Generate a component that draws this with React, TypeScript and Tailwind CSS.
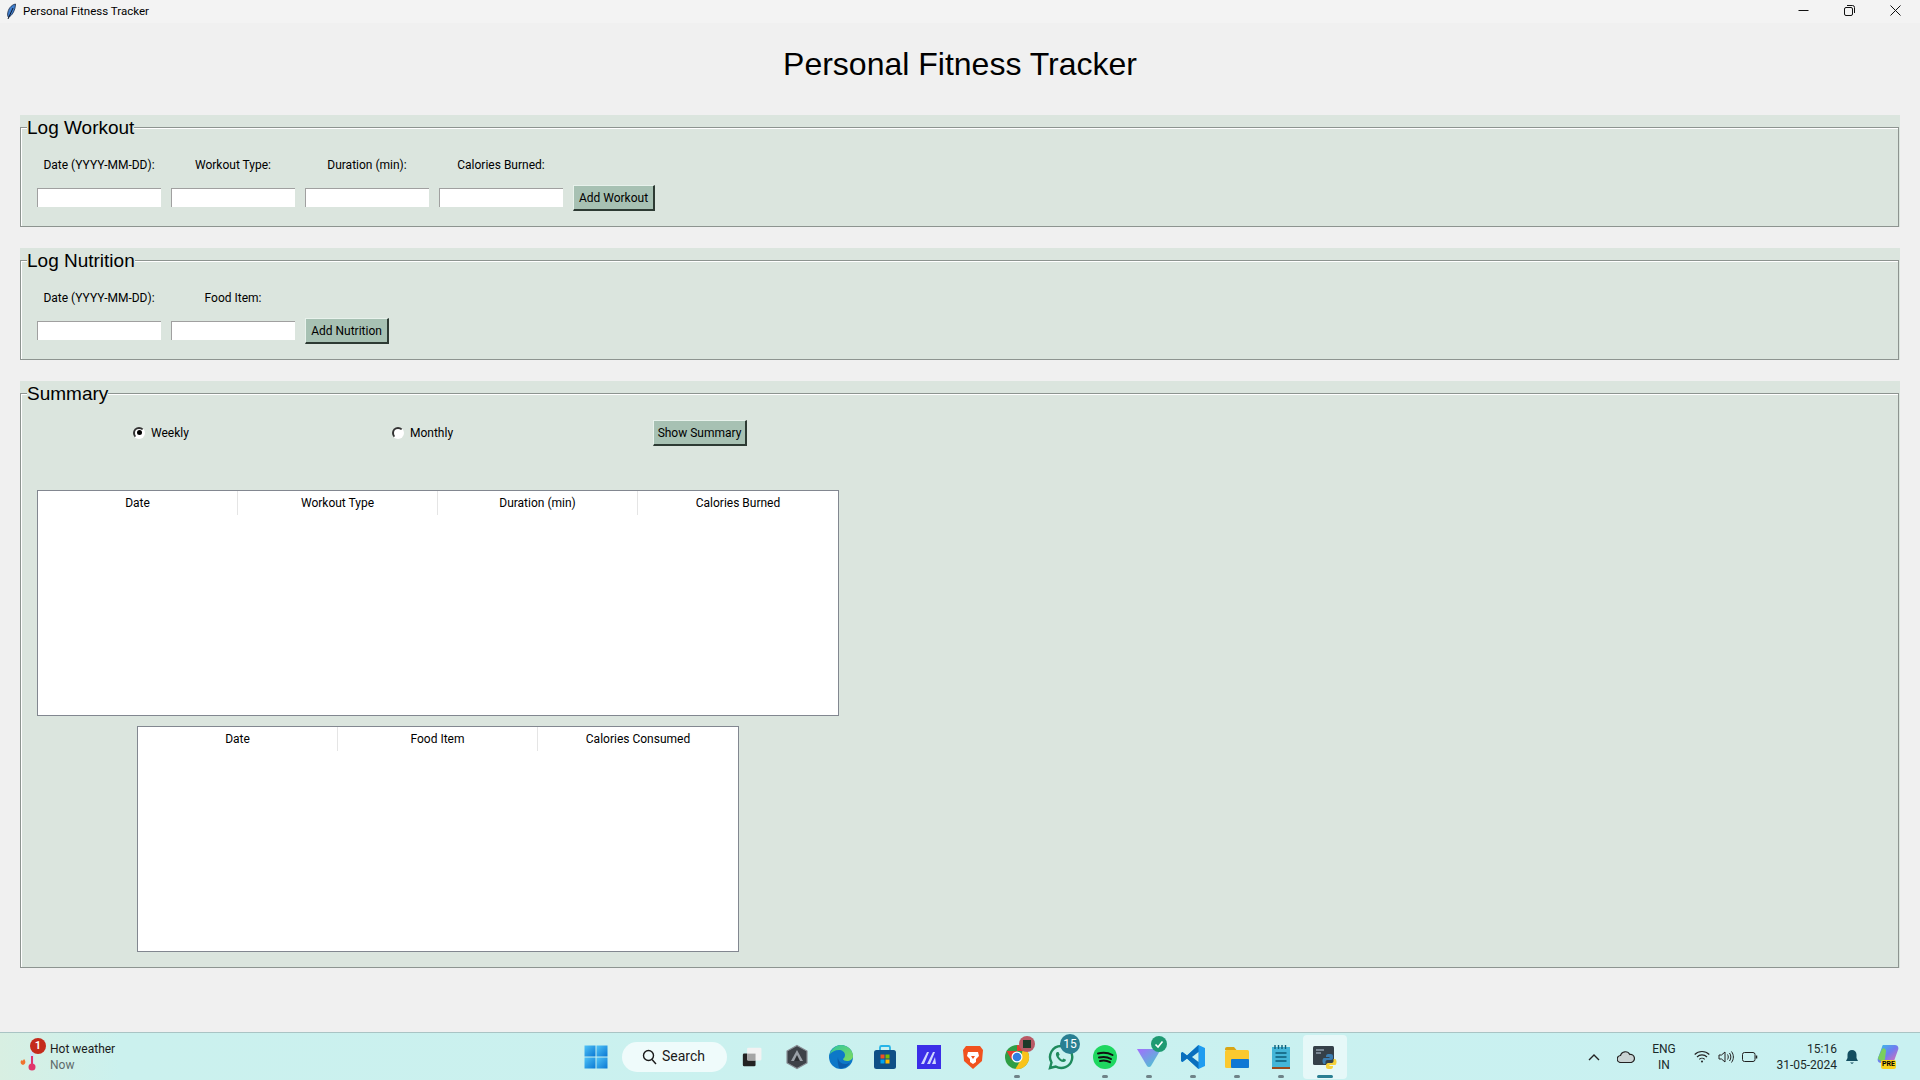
import React from "react";

const ui = "font-['Roboto',sans-serif]";

function Field({ children }: { children: React.ReactNode }) {
  return <div className="text-center text-[12px] leading-[16px] text-black">{children}</div>;
}

function Entry() {
  return <div className="h-[19px] w-[124px] -mt-[1px] bg-white border-t border-l border-[#a0a0a0]" />;
}

function TkButton({ children, w }: { children: React.ReactNode; w: string }) {
  return (
    <div className={`${w} h-[26px] flex items-center justify-center bg-[#a7c1b3] border-t border-l border-[#e8f2ec] border-r-2 border-b-2 border-r-[#2d3a33] border-b-[#2d3a33] text-[12px] text-black`}>
      {children}
    </div>
  );
}

function Frame({ title, h, children }: { title: string; h: string; children: React.ReactNode }) {
  return (
    <section className={`${h} mx-[20px] pt-[12px] pr-[1px] bg-[#dbe5de]`}>
      <div className="relative h-full border border-[#8d9490] px-[16px] shadow-[inset_1px_1px_0_#ffffff]">
        <h2 className="absolute left-[6px] -top-[12px] bg-[#dbe5de] text-[19px] leading-[24px] text-black font-['Liberation_Sans',sans-serif]">
          {title}
        </h2>
        {children}
      </div>
    </section>
  );
}

function Table({ cols, className }: { cols: string[]; className: string }) {
  return (
    <div className={`${className} h-[226px] bg-white border border-[#828790]`}>
      <div className="flex h-[24px]">
        {cols.map((c, i) => (
          <div key={c} className={`w-[200px] flex items-center justify-center text-[12px] text-black ${i < cols.length - 1 ? "border-r border-[#e5e5e5]" : ""}`}>
            {c}
          </div>
        ))}
      </div>
    </div>
  );
}

function Radio({ on, label }: { on?: boolean; label: string }) {
  return (
    <div className="flex items-center gap-[6px] text-[12px] text-black">
      <span className="relative w-[12px] h-[12px] rounded-full bg-white border-2 border-transparent border-t-[#333] border-l-[#333] -mt-[1px]">
        {on && <span className="absolute left-[1.5px] top-[1.5px] w-[5px] h-[5px] rounded-full bg-black" />}
      </span>
      {label}
    </div>
  );
}

function TaskIcon({ children, dot, active }: { children: React.ReactNode; dot?: boolean; active?: boolean }) {
  return (
    <div className={`relative w-[44px] h-[44px] flex items-center justify-center rounded ${active ? "bg-[#e6f8f8]" : ""}`}>
      {children}
      {dot && <span className="absolute bottom-[1px] left-[19px] w-[6px] h-[3px] rounded-full bg-[#6f8388]" />}
      {active && <span className="absolute bottom-[1px] left-[14px] w-[16px] h-[3px] rounded-full bg-[#2a7f92]" />}
    </div>
  );
}

const S = ({ children, size = 26 }: { children: React.ReactNode; size?: number }) => (
  <svg width={size} height={size} viewBox="0 0 26 26">{children}</svg>
);

function Badge({ children, color, className }: { children: React.ReactNode; color: string; className: string }) {
  return (
    <span className={`absolute rounded-full flex items-center justify-center text-white ${color} ${className}`}>{children}</span>
  );
}

export default function App() {
  return (
    <div className={`h-screen w-full flex flex-col overflow-hidden bg-[#f0f0f0] ${ui}`}>
      {/* Title bar */}
      <header className="h-[23px] shrink-0 bg-[#f3f3f3] flex items-center pl-[5px]">
        <svg width="12" height="18" viewBox="0 0 12 18">
          <path d="M10.500 1C6 2 3 6 2.600 11c-.1 1.500.2 2.600.8 3.200C7 13 10.500 7 10.500 1z" fill="#3f7fd0" stroke="#1a2a44" strokeWidth="0.8" />
          <path d="M8 5 3 16" stroke="#10182a" strokeWidth="1" />
        </svg>
        <span className="ml-[6px] text-[11.5px] text-black">Personal Fitness Tracker</span>
        <div className="ml-auto flex items-center -mt-[2px]">
          <svg className="mr-[35px]" width="11" height="11" viewBox="0 0 11 11"><path d="M0.500 5.500h10" stroke="#111" /></svg>
          <svg className="mr-[35px]" width="11" height="11" viewBox="0 0 11 11" fill="none" stroke="#111"><rect x="0.500" y="2.500" width="8" height="8" rx="1.500" /><path d="M3 .5h5.500a2 2 0 0 1 2 2V8" /></svg>
          <svg className="mr-[19px]" width="11" height="11" viewBox="0 0 11 11"><path d="M.5.5l10 10M10.500.5l-10 10" stroke="#111" /></svg>
        </div>
      </header>

      <main className="flex-1 min-h-0">
        <h1 className="mt-[23px] mb-[35px] h-[34px] leading-[36px] text-center text-[32px] text-black font-['Liberation_Sans',sans-serif]">
          Personal Fitness Tracker
        </h1>

        <Frame title="Log Workout" h="h-[112px]">
          <div className="grid grid-cols-[124px_124px_124px_124px_auto] gap-x-[10px] justify-start items-center pt-[29px]">
            <Field>Date (YYYY-MM-DD):</Field>
            <Field>Workout Type:</Field>
            <Field>Duration (min):</Field>
            <Field>Calories Burned:</Field>
            <span />
            <div className="col-span-5 h-[12px]" />
            <Entry />
            <Entry />
            <Entry />
            <Entry />
            <TkButton w="w-[82px]">Add Workout</TkButton>
          </div>
        </Frame>

        <div className="h-[21px]" />

        <Frame title="Log Nutrition" h="h-[112px]">
          <div className="grid grid-cols-[124px_124px_auto] gap-x-[10px] justify-start items-center pt-[29px]">
            <Field>Date (YYYY-MM-DD):</Field>
            <Field>Food Item:</Field>
            <span />
            <div className="col-span-3 h-[12px]" />
            <Entry />
            <Entry />
            <TkButton w="w-[84px]">Add Nutrition</TkButton>
          </div>
        </Frame>

        <div className="h-[21px]" />

        <Frame title="Summary" h="h-[587px]">
          <div className="grid grid-cols-[259px_261px_auto] justify-start items-center pl-[96px] pt-[26px]">
            <Radio on label="Weekly" />
            <Radio label="Monthly" />
            <TkButton w="w-[94px]">Show Summary</TkButton>
          </div>
          <Table className="mt-[44px] w-[802px]" cols={["Date", "Workout Type", "Duration (min)", "Calories Burned"]} />
          <Table className="mt-[10px] ml-[100px] w-[602px]" cols={["Date", "Food Item", "Calories Consumed"]} />
        </Frame>
      </main>

      {/* Taskbar */}
      <footer className="h-[48px] shrink-0 flex items-center border-t border-[#a9c4c4] bg-[linear-gradient(90deg,#d8efe2_0px,#cbf1ee_120px,#c9f1f1_100%)]">
        <div className="relative w-[584px] shrink-0 h-full flex items-center pl-[50px]">
          <svg className="absolute left-[18px] top-[14px]" width="20" height="26" viewBox="0 0 20 26">
            <path d="M6 12c2 2 2 5-1 6-3-1-3-4-1-5 0 1 1 1 2-1z" fill="#f0732e" />
            <rect x="12" y="4" width="4" height="16" rx="2" fill="#cfe0f8" />
            <circle cx="14" cy="20" r="3.500" fill="#e0356b" />
            <rect x="13" y="9" width="2" height="10" fill="#e0356b" />
          </svg>
          <Badge color="bg-[#c42b1c]" className="left-[30px] top-[5px] w-[16px] h-[16px] text-[11px] font-semibold">1</Badge>
          <div className="text-[12px] leading-[16px]">
            <div className="text-[#1b1b1b]">Hot weather</div>
            <div className="text-[#5e6b6b]">Now</div>
          </div>
        </div>

        <svg width="24" height="24" viewBox="0 0 24 24" className="shrink-0">
          <defs>
            <linearGradient id="w" x1="0" y1="0" x2="1" y2="1"><stop offset="0" stopColor="#4fc3f7" /><stop offset="1" stopColor="#0a78d4" /></linearGradient>
          </defs>
          <rect x="0.500" y="0.500" width="11" height="11" fill="url(#w)" />
          <rect x="12.500" y="0.500" width="11" height="11" fill="url(#w)" />
          <rect x="0.500" y="12.500" width="11" height="11" fill="url(#w)" />
          <rect x="12.500" y="12.500" width="11" height="11" fill="url(#w)" />
        </svg>

        <div className="ml-[14px] w-[105px] h-[30px] shrink-0 rounded-full bg-[#effbfb] flex items-center pl-[20px] gap-[5px] text-[14px] text-[#1a1a1a]">
          <svg width="15" height="16" viewBox="0 0 15 16" fill="none" stroke="#1a1a1a" strokeWidth="1.400"><circle cx="6.500" cy="6.500" r="5" /><path d="M10 10.500l4 4.500" /></svg>
          Search
        </div>

        <div className="ml-[4px] flex items-center shrink-0">
          <TaskIcon>
            <S size={22}>
              <rect x="1" y="9" width="15" height="15" rx="1.500" fill="#222" />
              <rect x="6" y="2" width="17" height="15" rx="1.500" fill="#f2f2f2" />
              <rect x="6" y="9" width="10" height="8" fill="#a5a5a5" />
            </S>
          </TaskIcon>
          <TaskIcon>
            <S>
              <path d="M13 1.500 23 7v12l-10 5.500L3 19V7z" fill="#3e4248" stroke="#8a8f96" strokeWidth="1.200" />
              <path d="M13 6l6 11H7z" fill="#9aa0a7" />
              <path d="M13 11l3 6h-6z" fill="#2c2f33" />
            </S>
          </TaskIcon>
          <TaskIcon>
            <S>
              <defs>
                <linearGradient id="e1" x1="0" y1="0" x2="1" y2="1"><stop offset="0" stopColor="#2fc6a0" /><stop offset="1" stopColor="#7fdc5e" /></linearGradient>
              </defs>
              <circle cx="13" cy="13" r="12" fill="#0d78c8" />
              <path d="M1.500 11C3 5 8 1 13 1c6.500 0 12 5 12 11 0 3.500-3 5-6 5-2 0-4-1-4-2 1-1 2-2 2-4 0-3-3-5-6-5-4 0-8 2-10 5z" fill="url(#e1)" />
              <path d="M10 13c0 4 3 7 7 7 2 0 4-.5 5-2-2 5-7 7-11 6-1-4-2-8-1-11z" fill="#0a5cab" />
            </S>
          </TaskIcon>
          <TaskIcon>
            <S>
              <path d="M8 6V3.500A1.500 1.500 0 0 1 9.500 2h7A1.500 1.500 0 0 1 18 3.500V6" fill="none" stroke="#27b4e8" strokeWidth="1.800" />
              <rect x="2" y="6" width="22" height="19" rx="2.500" fill="#0f4f86" />
              <rect x="8.500" y="10.500" width="4" height="4" fill="#f25022" />
              <rect x="13.500" y="10.500" width="4" height="4" fill="#7fba00" />
              <rect x="8.500" y="15.500" width="4" height="4" fill="#00a4ef" />
              <rect x="13.500" y="15.500" width="4" height="4" fill="#ffb900" />
            </S>
          </TaskIcon>
          <TaskIcon>
            <S>
              <rect x="1" y="1" width="24" height="24" fill="#3b2ee8" />
              <path d="M5 20l6-12h2L8 20zM11 20l6-12h2l-5 12zM16 20l3-7 1 7z" fill="#cfd6ff" />
            </S>
          </TaskIcon>
          <TaskIcon>
            <S>
              <path d="M6 2h14l3 4-1 11-9 8-9-8L3 6z" fill="#f1521e" />
              <path d="M8 8h10l1 4-3 3v3l-3 2-3-2v-3l-3-3z" fill="#fff" />
              <path d="M11 12h4l-2 3z" fill="#f1521e" />
            </S>
          </TaskIcon>
          <TaskIcon dot>
            <S>
              <circle cx="13" cy="13" r="12" fill="#2f9e44" />
              <path d="M13 1a12 12 0 0 1 10.400 6H13z" fill="#e33b2e" />
              <path d="M2.600 7 8 16.500 13 7z" fill="#e33b2e" />
              <path d="M23.400 7a12 12 0 0 1-12 18l5-8.500 2-9.500z" fill="#f9c31a" />
              <circle cx="13" cy="13" r="5.500" fill="#fff" />
              <circle cx="13" cy="13" r="4.300" fill="#2f7de1" />
            </S>
            <Badge color="bg-[#b85a66]" className="left-[24px] top-[1px] w-[16px] h-[16px]">
              <span className="w-[8px] h-[8px] bg-[#1f3a2a] block" />
            </Badge>
          </TaskIcon>
          <TaskIcon>
            <S>
              <path d="M13 2a11 11 0 0 0-9.500 16.500L2 24l5.700-1.500A11 11 0 1 0 13 2z" fill="none" stroke="#1e8a5c" strokeWidth="2.400" />
              <path d="M9 8c-1.500 1-1.500 3 0 5.500s4 4.500 6.500 4.500c1.500 0 2.500-1 2.500-2.200l-2.500-1.300-1.200 1.200c-1.500-.5-3-2-3.700-3.700l1.100-1.200L10.500 8z" fill="#1e8a5c" />
            </S>
            <Badge color="bg-[#2a7f92]" className="left-[21px] -top-[1px] w-[20px] h-[20px] text-[12px]">15</Badge>
          </TaskIcon>
          <TaskIcon dot>
            <S>
              <circle cx="13" cy="13" r="12" fill="#1ed760" />
              <path d="M6 9.500c5-1.500 10-1 14.500 1.500M7 13.500c4-1 8.500-.7 12 1.500M8 17c3.500-.8 7-.5 10 1.200" fill="none" stroke="#111" strokeWidth="2" strokeLinecap="round" />
            </S>
          </TaskIcon>
          <TaskIcon dot>
            <S>
              <defs>
                <linearGradient id="p" x1="0" y1="0" x2="1" y2="1"><stop offset="0" stopColor="#a56cff" /><stop offset="1" stopColor="#3fd1c9" /></linearGradient>
              </defs>
              <path d="M1 5h24L15 22a2.500 2.500 0 0 1-4 0z" fill="url(#p)" />
            </S>
            <Badge color="bg-[#1f9a72]" className="left-[24px] top-[1px] w-[16px] h-[16px]">
              <svg width="10" height="10" viewBox="0 0 10 10" fill="none" stroke="#fff" strokeWidth="1.600"><path d="M1.500 5.500 4 8l4.500-5.500" /></svg>
            </Badge>
          </TaskIcon>
          <TaskIcon dot>
            <S>
              <path d="M18.500 1 25 4v18l-6.500 3L7 14.500 2.500 18 1 17v-8l1.500-1L7 11.500z" fill="#1f9cf0" />
              <path d="M18.500 1 7 11.500 2.500 8 1 9v8l1.500 1L7 14.500 18.500 25z" fill="#0a6fbd" />
              <path d="M18.500 8 12 13l6.500 5z" fill="#c9f1f1" />
            </S>
          </TaskIcon>
          <TaskIcon dot>
            <S>
              <path d="M1 5a2 2 0 0 1 2-2h7l2.500 3H1z" fill="#d9a514" />
              <rect x="1" y="6" width="24" height="18" rx="1.500" fill="#fbc92f" />
              <rect x="7" y="15" width="18" height="9" rx="1" fill="#0f78d4" />
            </S>
          </TaskIcon>
          <TaskIcon dot>
            <S>
              <rect x="4" y="3" width="18" height="20" fill="#44b6d8" />
              <path d="M7 1v4M10.500 1v4M14 1v4M17.500 1v4" stroke="#0f5f78" strokeWidth="1.400" />
              <path d="M7.500 9h11M7.500 13h11M7.500 17h11" stroke="#0d5c78" strokeWidth="1.600" />
              <rect x="4" y="23" width="18" height="2" fill="#9a4a1d" />
            </S>
          </TaskIcon>
          <TaskIcon active>
            <S>
              <rect x="1" y="2" width="21" height="19" rx="1.500" fill="#354049" />
              <path d="M4 6h8M4 9h5" stroke="#bcd" strokeWidth="1.200" />
              <path d="M17 10c-3 0-3 1.500-3 3h3.500v1H12c-2 0-2 6 0 6h1.500v-2c0-1.500 1-2 2.500-2h3c1 0 2-1 2-2v-2c0-2-2-2-4-2z" fill="#3b7db0" />
              <path d="M18 25c3 0 3-1.500 3-3h-3.500v-1H23c2 0 2-6 0-6h-1.500v2c0 1.500-1 2-2.500 2h-3c-1 0-2 1-2 2v2c0 2 2 2 4 2z" fill="#f5d23c" />
            </S>
          </TaskIcon>
        </div>

        {/* Tray */}
        <div className="ml-auto flex items-center shrink-0 h-full text-[12px] text-[#1a2a2a] pr-[20px]">
          <svg width="12" height="8" viewBox="0 0 12 8" fill="none" stroke="#222" strokeWidth="1.400" className="mr-[17px]"><path d="M1 7l5-5 5 5" /></svg>
          <svg width="18" height="12" viewBox="0 0 18 12" className="mr-[16px]"><path d="M4 11.500a3.500 3.500 0 0 1-.5-7 5 5 0 0 1 9.300-1A4 4 0 0 1 14 11.500z" fill="#c9d3d3" stroke="#222" strokeWidth="1.200" /></svg>
          <div className="w-[26px] text-center leading-[16px] mr-[17px]">
            <div>ENG</div>
            <div>IN</div>
          </div>
          <svg width="16" height="13" viewBox="0 0 16 13" fill="none" stroke="#222" strokeWidth="1.100" className="mr-[8px]">
            <path d="M.7 4.500c4-4 10.600-4 14.600 0M3 7c2.800-2.800 7.200-2.800 10 0M5.300 9.300c1.500-1.500 3.900-1.500 5.400 0" />
            <circle cx="8" cy="11.500" r="1" fill="#222" stroke="none" />
          </svg>
          <svg width="16" height="14" viewBox="0 0 16 14" fill="none" stroke="#222" strokeWidth="1" className="mr-[8px]">
            <path d="M1 5h2.500L7 2v10L3.500 9H1z" />
            <path d="M9.500 4.500c1 1.500 1 3.500 0 5M11.500 3c1.800 2.500 1.800 5.500 0 8M13.500 1.500c2.500 3.500 2.500 7.500 0 11" />
          </svg>
          <svg width="16" height="10" viewBox="0 0 16 10" fill="none" stroke="#222" className="mr-[17px]">
            <rect x=".5" y=".5" width="12.500" height="9" rx="2" />
            <path d="M14.500 3.500v3" strokeWidth="1.500" />
          </svg>
          <div className="leading-[16px] text-right mr-[8px] w-[62px]">
            <div>15:16</div>
            <div className="whitespace-nowrap">31-05-2024</div>
          </div>
          <svg width="14" height="16" viewBox="0 0 14 16" className="mr-[17px]"><path d="M7 1a4.500 4.500 0 0 0-4.500 4.500V9L1 12h12l-1.500-3V5.500A4.500 4.500 0 0 0 7 1z" fill="#134e60" /><path d="M5 13.500h4l-2 1.500z" fill="#134e60" /></svg>
          <div className="relative w-[24px] h-[26px]">
            <svg width="24" height="20" viewBox="0 0 24 20">
              <defs>
                <linearGradient id="c" x1="0" y1="0" x2="1" y2="1"><stop offset="0" stopColor="#33c3e8" /><stop offset="0.5" stopColor="#6f7cf0" /><stop offset="1" stopColor="#f16ba8" /></linearGradient>
              </defs>
              <path d="M7 1h12c3 0 4 3 3 5l-4 11c-1 2-2 2-4 2H5c-3 0-4-3-3-5L6 3c.3-1 .5-2 1-2z" fill="url(#c)" />
              <path d="M2 14 6 5c2-2 4 0 4 2l-1 8c-1 3-6 3-7-1z" fill="#7ad05c" />
            </svg>
            <span className="absolute left-[5px] top-[16px] h-[9px] px-[1px] rounded-[2px] bg-[#f9d21a] text-[7px] leading-[9px] font-bold text-black">PRE</span>
          </div>
        </div>
      </footer>
    </div>
  );
}
